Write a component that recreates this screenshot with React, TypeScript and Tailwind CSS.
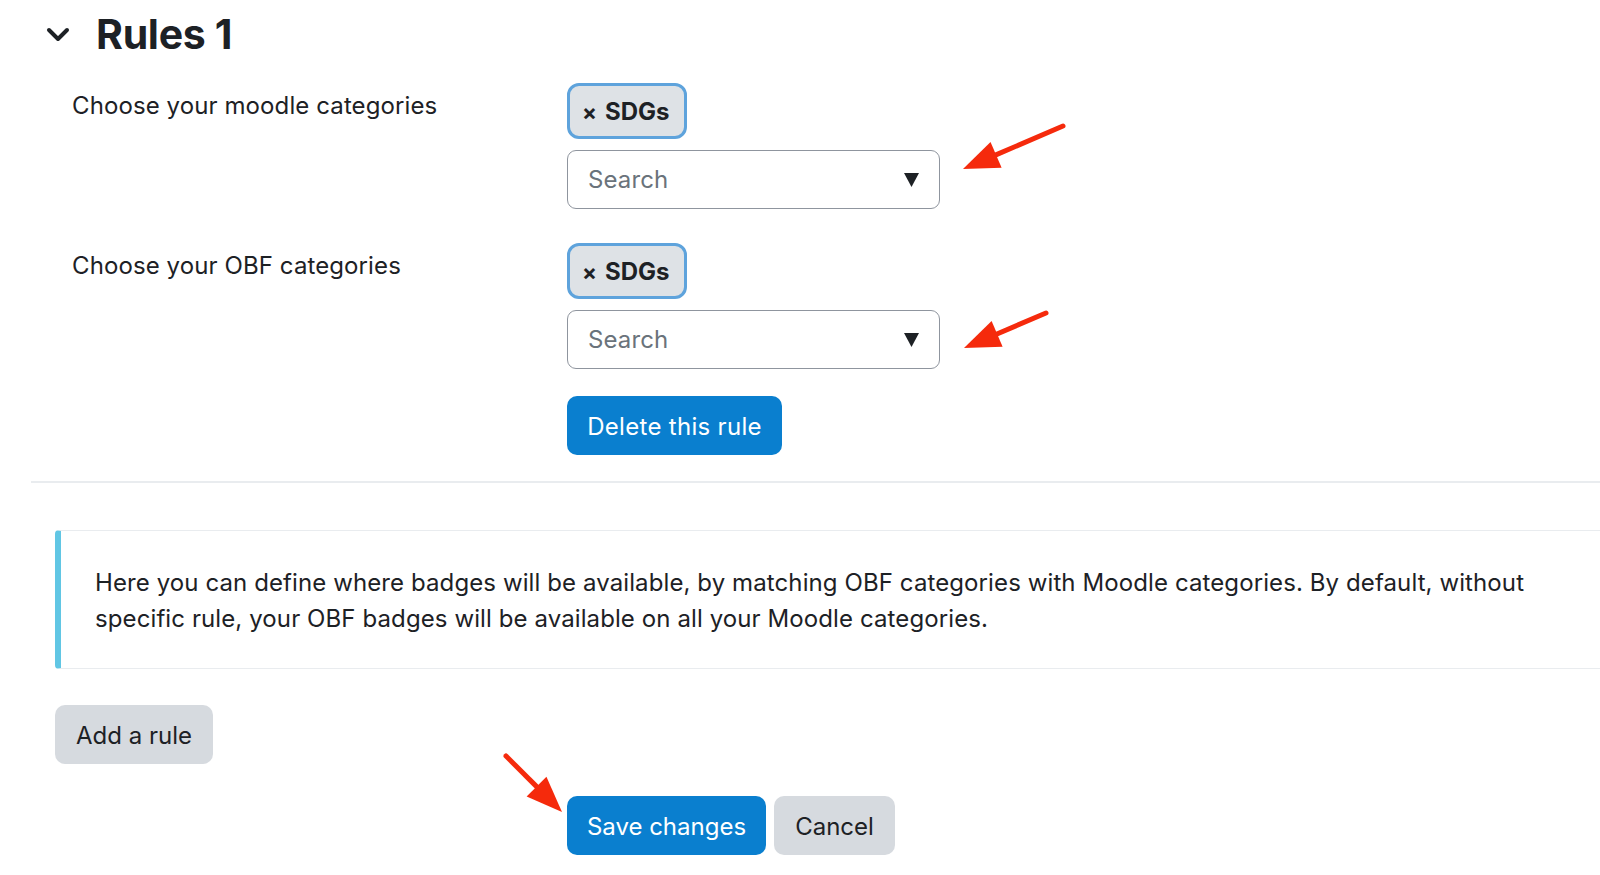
import React from "react";

type Pt = [number, number];

function arrowParts(tail: Pt, tip: Pt, len = 36, half = 14) {
  const dx = tip[0] - tail[0];
  const dy = tip[1] - tail[1];
  const d = Math.hypot(dx, dy);
  const ux = dx / d;
  const uy = dy / d;
  const bx = tip[0] - ux * len;
  const by = tip[1] - uy * len;
  const head = `${tip[0]},${tip[1]} ${bx - uy * half},${by + ux * half} ${bx + uy * half},${by - ux * half}`;
  return { bx: tip[0] - ux * (len - 4), by: tip[1] - uy * (len - 4), head };
}

function Arrow({ tail, tip }: { tail: Pt; tip: Pt }) {
  const { bx, by, head } = arrowParts(tail, tip);
  return (
    <g>
      <line x1={tail[0]} y1={tail[1]} x2={bx} y2={by} stroke="#f52a0c" strokeWidth={5} strokeLinecap="round" />
      <polygon points={head} fill="#f52a0c" />
    </g>
  );
}

function Tag() {
  return (
    <div className="flex h-[56px] w-[120px] items-center rounded-[12px] border-[3px] border-[#5ea3dc] bg-[#dee2e6] pl-[12px] pt-[2px] text-[24px] font-bold text-[#1d2125]">
      <span className="mr-[8px] text-[22px]">×</span>
      <span>SDGs</span>
    </div>
  );
}

function SearchSelect() {
  return (
    <div className="mt-[11px] flex h-[59px] w-[373px] items-center justify-between rounded-[9px] border border-[#8f959e] pl-[20px] pr-[20px]">
      <span className="pt-[1px] text-[24px] tracking-[0.1px] text-[#6a737b]">Search</span>
      <svg width="15" height="14" viewBox="0 0 15 14">
        <polygon points="0,0 15,0 7.5,14" fill="#1d2125" />
      </svg>
    </div>
  );
}

function Row({ label, children }: { label: string; children: React.ReactNode }) {
  return (
    <div className="grid grid-cols-[495px_1fr]">
      <div className="pt-[5px] text-[24px] leading-[36px] tracking-[0.1px]">{label}</div>
      <div className="flex flex-col items-start">{children}</div>
    </div>
  );
}

export default function App() {
  return (
    <div className="relative h-[875px] w-full overflow-hidden bg-white font-['Inter',sans-serif] text-[#1d2125]">
      <div className="pl-[31px] pt-[6px]">
        <div className="flex h-[56px] items-center">
          <svg className="ml-[15px] mt-[2px]" width="24" height="16" viewBox="0 0 24 16">
            <polyline points="3,3 12,12 21,3" fill="none" stroke="#1d2125" strokeWidth="4" strokeLinecap="round" strokeLinejoin="round" />
          </svg>
          <h2 className="ml-[26px] text-[41px] font-bold leading-[56px] tracking-[-0.3px]">Rules 1</h2>
        </div>

        <div className="mt-[21px] pl-[41px]">
          <Row label="Choose your moodle categories">
            <Tag />
            <SearchSelect />
          </Row>
          <div className="mt-[34px]">
            <Row label="Choose your OBF categories">
              <Tag />
              <SearchSelect />
              <button className="mt-[27px] h-[59px] w-[215px] rounded-[10px] bg-[#0a7fcf] pt-[2px] text-[24px] tracking-[0.3px] text-white">
                Delete this rule
              </button>
            </Row>
          </div>
        </div>

        <div className="mt-[26px] h-[2px] bg-[#e9ecef]" />
      </div>

      <div className="pl-[55px]">
        <div className="mt-[47px] rounded-l-[4px] border-y border-l-[6px] border-y-[#e9ecef] border-l-[#61c6e4] pb-[31px] pl-[34px] pt-[34px] text-[24px] leading-[36px] tracking-[0.1px]">
          Here you can define where badges will be available, by matching OBF categories with Moodle categories. By default, without
          <br />
          specific rule, your OBF badges will be available on all your Moodle categories.
        </div>

        <button className="mt-[36px] h-[59px] w-[158px] rounded-[10px] bg-[#d6dadf] pt-[2px] text-[24px] text-[#1d2125]">
          Add a rule
        </button>

        <div className="mt-[32px] flex gap-[8px] pl-[512px]">
          <button className="h-[59px] w-[199px] rounded-[10px] bg-[#0a7fcf] pt-[2px] text-[24px] text-white">Save changes</button>
          <button className="h-[59px] w-[121px] rounded-[10px] bg-[#d6dadf] pt-[2px] text-[24px] text-[#1d2125]">Cancel</button>
        </div>
      </div>

      <svg className="pointer-events-none absolute inset-0" width="1600" height="875">
        <Arrow tail={[1063, 126]} tip={[963, 169]} />
        <Arrow tail={[1046, 313]} tip={[964, 348]} />
        <Arrow tail={[506, 756]} tip={[562, 812]} />
      </svg>
    </div>
  );
}
